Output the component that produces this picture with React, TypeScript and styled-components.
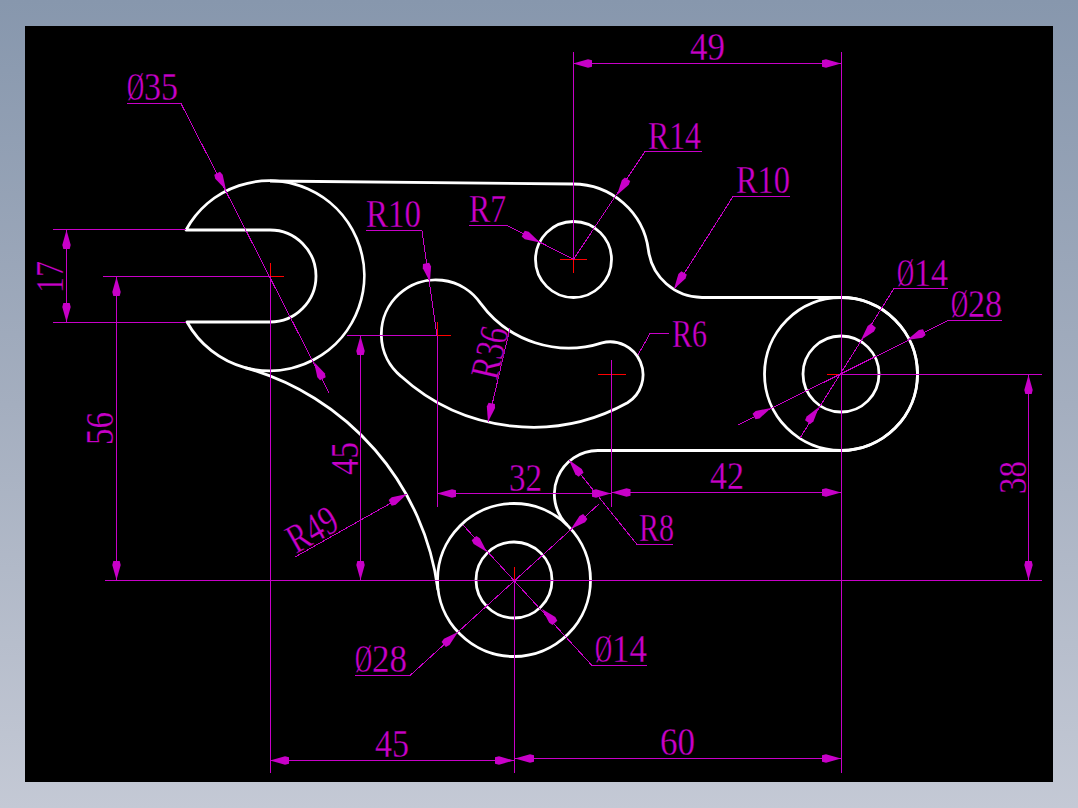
import React from "react";
import styled, { createGlobalStyle } from "styled-components";

const MAGENTA = "#c800c8";

const GlobalStyle = createGlobalStyle`
  html, body {
    margin: 0;
    padding: 0;
    background: #8a99ae;
  }
`;

const Page = styled.div`
  width: 1078px;
  height: 808px;
  box-sizing: border-box;
  padding: 26px 25px;
  background: linear-gradient(180deg, #8797ad 0%, #a4aebf 50%, #c4c9d5 100%);
`;

const Sheet = styled.svg`
  display: block;
  width: 1028px;
  height: 756px;
  background: #000000;
`;

const Outline = styled.path`
  fill: none;
  stroke: #ffffff;
  stroke-width: 2.8;
  stroke-linejoin: round;
`;

const Ring = styled.circle`
  fill: none;
  stroke: #ffffff;
  stroke-width: 2.8;
`;

const DimLine = styled.line`
  stroke: ${MAGENTA};
  stroke-width: 1;
  shape-rendering: crispEdges;
`;

const CenterMark = styled.line`
  stroke: #ff0000;
  stroke-width: 1;
  shape-rendering: crispEdges;
`;

const Head = styled.polygon`
  fill: ${MAGENTA};
`;

// the thin black stroke eats into the glyphs so they read as light as the CAD font
const Label = styled.text`
  font-family: "Liberation Serif", "Times New Roman", serif;
  font-size: 41px;
  fill: ${MAGENTA};
  stroke: #000000;
  stroke-width: 0.3;
`;

// tip of the arrow, then a point on the shaft side
const Arrow = ({ x, y, fx, fy }: { x: number; y: number; fx: number; fy: number }) => {
  const len = Math.hypot(fx - x, fy - y);
  const ux = (fx - x) / len;
  const uy = (fy - y) / len;
  const at = (d: number, w: number) => `${x + ux * d - uy * w},${y + uy * d + ux * w}`;
  return <Head points={[at(0, 0), at(15, 4.2), at(19, 3.2), at(19, -3.2), at(15, -4.2)].join(" ")} />;
};

type DimTextProps = {
  x: number;
  y: number;
  w: number;
  rot?: number;
  dia?: boolean;
  children: string;
};

// dimension text, squeezed to the narrow CAD proportions
const DimText = ({ x, y, w, rot, dia, children }: DimTextProps) => (
  <Label x={x} y={y} transform={rot ? `rotate(${rot} ${x} ${y})` : undefined}>
    {dia ? (
      <>
        <tspan textLength={17} lengthAdjust="spacingAndGlyphs">Ø</tspan>
        <tspan textLength={w - 17} lengthAdjust="spacingAndGlyphs">{children}</tspan>
      </>
    ) : (
      <tspan textLength={w} lengthAdjust="spacingAndGlyphs">{children}</tspan>
    )}
  </Label>
);

const dimLines: number[][] = [
  // 49
  [573.5, 52, 573.5, 260], [841.5, 52, 841.5, 773], [573, 63.5, 841, 63.5],
  // Ø35
  [127, 103.5, 181, 103.5], [181, 103.5, 329, 393],
  // R14
  [645, 151.5, 702, 151.5], [645, 151.5, 573, 260],
  // R10 right
  [733, 196.5, 790, 196.5], [733, 196.5, 675, 288],
  // R7
  [469, 225.5, 507, 225.5], [507, 225.5, 573, 259],
  // R10 left
  [366, 230.5, 422, 230.5], [422, 230.5, 437, 336],
  // 45 vertical
  [347, 335.5, 437, 335.5], [360.5, 336, 360.5, 580],
  // 32 / 42
  [437.5, 336, 437.5, 507], [611.5, 360, 611.5, 507], [437, 493.5, 611, 493.5], [611, 492.5, 841, 492.5],
  // R36
  [510, 328, 488, 422],
  // R6
  [650, 333.5, 669, 333.5], [650, 333.5, 638, 355],
  // R8
  [637, 544.5, 673, 544.5], [637, 544.5, 569, 460],
  // bottom Ø28
  [355, 675.5, 410, 675.5], [410, 675.5, 599, 504],
  // bottom Ø14
  [592, 665.5, 647, 665.5], [592, 665.5, 463, 525],
  // 45 / 60 horizontal
  [270.5, 276, 270.5, 773], [514.5, 580, 514.5, 773], [270, 760.5, 514, 760.5], [515, 758.5, 841, 758.5],
  // datum lines
  [105, 580.5, 1042, 580.5], [841, 374.5, 1042, 374.5], [103, 276.5, 270, 276.5],
  // 38
  [1028.5, 374, 1028.5, 580],
  // 56
  [116.5, 277, 116.5, 580],
  // 17
  [53, 229.5, 186, 229.5], [53, 322.5, 186, 322.5], [66.5, 230, 66.5, 322],
  // R49
  [295, 557, 407, 494],
  // right Ø14
  [894, 288.5, 948, 288.5], [894, 288.5, 800, 438],
  // right Ø28
  [948, 320.5, 1002, 320.5], [948, 320.5, 738, 425],
];

const centerMarks: number[][] = [
  [270.5, 263, 270.5, 276], [270, 276.5, 284, 276.5],
  [560, 259.5, 587, 259.5], [573.5, 260, 573.5, 273],
  [437, 335.5, 451, 335.5], [437.5, 322, 437.5, 336],
  [598, 374.5, 626, 374.5],
  [827, 374.5, 841, 374.5],
  [514.5, 567, 514.5, 580],
];

const arrows: number[][] = [
  [573, 63.5, 600, 63.5], [841, 63.5, 815, 63.5],
  [226, 190, 217, 173], [314, 362, 323, 379],
  [617, 195, 627, 180],
  [674, 289, 684, 273],
  [540, 242.5, 522, 233],
  [430, 282, 426, 263],
  [360.5, 336, 360.5, 355], [360.5, 580, 360.5, 560],
  [488, 422, 492, 402],
  [437, 493.5, 457, 493.5], [611, 493.5, 592, 493.5],
  [611.5, 492.5, 631, 492.5], [841, 492.5, 821, 492.5],
  [569, 460, 583, 477],
  [458, 632, 442, 646], [571, 529, 587, 515],
  [542, 609, 556, 624], [487, 552, 473, 537],
  [270, 760.5, 290, 760.5], [514, 760.5, 495, 760.5],
  [515, 758.5, 535, 758.5], [841, 758.5, 821, 758.5],
  [1028.5, 375, 1028.5, 395], [1028.5, 580, 1028.5, 560],
  [116.5, 277, 116.5, 297], [116.5, 580, 116.5, 560],
  [66.5, 230, 66.5, 250], [66.5, 322, 66.5, 302],
  [407, 494, 388, 504],
  [861, 340, 874, 325], [819, 407, 807, 423],
  [907, 340, 927, 331], [771, 408, 753, 417],
];

const App = () => {
  return (
    <>
      <GlobalStyle />
      <Page>
        <Sheet viewBox="25 26 1028 756">
          {centerMarks.map((m, i) => (
            <CenterMark key={i} x1={m[0]} y1={m[1]} x2={m[2]} y2={m[3]} />
          ))}

          {/* part outline */}
          <Outline d="M186 230 A95 95 0 1 1 245 367.6 A95 95 0 0 1 187 322 L270 322 A46 46 0 0 0 270 230 Z" />
          <Outline d="M270 181 L573 184 A76 76 0 0 1 648.4 250 A54.5 54.5 0 0 0 702 297.5 L841 297.5 A76.5 76.5 0 0 1 841 450.5 L598 450.5 A43.6 43.6 0 0 0 567.4 525.2" />
          <Outline d="M245 367.6 A267 267 0 0 1 438 590" />
          <Outline d="M480.8 303.6 A109 109 0 0 0 602 342.8 A33 33 0 0 1 627.5 402.8 A196 196 0 0 1 401 376.3 A54.5 54.5 0 1 1 480.8 303.6 Z" />
          <Ring cx={841} cy={374} r={76.5} />
          <Ring cx={841} cy={374} r={38} />
          <Ring cx={514} cy={580} r={76.5} />
          <Ring cx={514} cy={580} r={38} />
          <Ring cx={573.5} cy={259.5} r={38} />

          {dimLines.map((l, i) => (
            <DimLine key={i} x1={l[0]} y1={l[1]} x2={l[2]} y2={l[3]} />
          ))}
          {arrows.map((a, i) => (
            <Arrow key={i} x={a[0]} y={a[1]} fx={a[2]} fy={a[3]} />
          ))}

          <DimText x={690} y={60} w={35}>49</DimText>
          <DimText x={127} y={100} w={51} dia>35</DimText>
          <DimText x={648} y={149} w={53}>R14</DimText>
          <DimText x={736} y={193} w={54}>R10</DimText>
          <DimText x={469} y={222} w={37}>R7</DimText>
          <DimText x={366} y={227} w={55}>R10</DimText>
          <DimText x={672} y={347} w={35}>R6</DimText>
          <DimText x={509} y={491} w={33}>32</DimText>
          <DimText x={710} y={489} w={34}>42</DimText>
          <DimText x={639} y={541} w={35}>R8</DimText>
          <DimText x={355} y={672} w={52} dia>28</DimText>
          <DimText x={595} y={662} w={52} dia>14</DimText>
          <DimText x={375} y={757} w={34}>45</DimText>
          <DimText x={660} y={755} w={35}>60</DimText>
          <DimText x={897} y={286} w={51} dia>14</DimText>
          <DimText x={951} y={317} w={51} dia>28</DimText>
          <DimText x={1026} y={494} w={33} rot={-90}>38</DimText>
          <DimText x={113} y={445} w={33} rot={-90}>56</DimText>
          <DimText x={62.5} y={293} w={32} rot={-90}>17</DimText>
          <DimText x={357.5} y={475} w={33} rot={-90}>45</DimText>
          <DimText x={296} y={554} w={52} rot={-29.5}>R49</DimText>
          <DimText x={497} y={381} w={52} rot={-77}>R36</DimText>
        </Sheet>
      </Page>
    </>
  );
};

export default App;
